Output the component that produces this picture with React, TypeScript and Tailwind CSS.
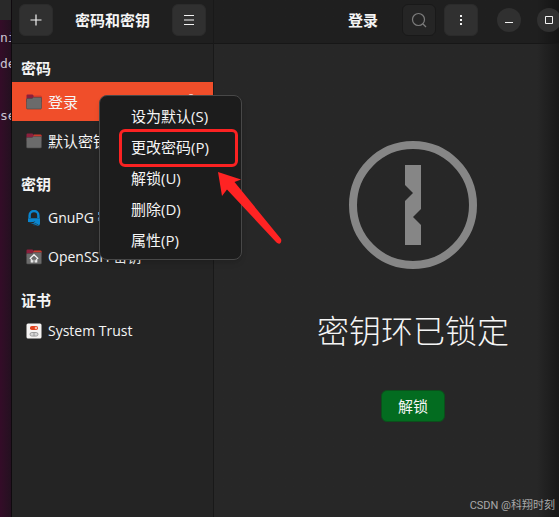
import type {ReactNode} from 'react';

type KeyringItem = {
  label: string;
  icon: ReactNode;
  selected?: boolean;
  latin?: boolean;
  compact?: boolean;
};

type Section = {
  title: string;
  items: KeyringItem[];
};

const FolderIcon = ({home = false}: {home?: boolean}) => (
  <svg viewBox="0 0 16 16" className="size-4 shrink-0" aria-hidden="true">
    <path d="M.5 1.5q0-1 1-1h5L8 2h6.5q1 0 1 1v5H.5z" fill="#8c1f3c"/>
    <path d="M8 1.5h6.5q1 0 1 1V4H7z" fill="#d33a2c"/>
    <path d="M1.5 4.5H6L7.5 3.4H15q.5 0 .5.5V14q0 1-1 1h-13q-1 0-1-1V5.5q0-1 1-1z" fill="#6b6b6b" stroke="#484848" strokeWidth=".6"/>
    {home && (
      <path d="M3.8 9.8 8 5.7l4.2 4.1M5.3 9.7V13h1.5v-2.2M10.7 9.7V13H9.2v-2.2" fill="none" stroke="#f2f2f2" strokeWidth="1.2"/>
    )}
  </svg>
);

const GnupgIcon = () => (
  <svg viewBox="0 0 16 16" className="size-4 shrink-0" aria-hidden="true">
    <path d="M3.6 8V5.4a4.4 4.4 0 0 1 8.8 0V8" fill="none" stroke="#0a86cf" strokeWidth="2.4"/>
    <path d="M2 8.2h12v5.6q0 2-2.5 2H9q3-.2 3.5-1.7-2 1.2-5.5 1 3-.6 4-2.2-2.5 1.2-6.5.8 4-.6 5-2.4-3 1.3-7.5.8z" fill="#0a86cf"/>
  </svg>
);

const TrustIcon = () => (
  <svg viewBox="0 0 16 16" className="size-4 shrink-0" aria-hidden="true">
    <rect x=".5" y=".5" width="15" height="15" rx="1.5" fill="#f5f3f2"/>
    <rect x="4" y="3" width="8" height="4" rx="1.8" fill="#e2431e"/>
    <circle cx="10" cy="5" r="1.3" fill="#f7b9a6"/>
    <rect x="4" y="9.5" width="8" height="3.6" rx="1.8" fill="#d6d6d6" stroke="#8d8d8d" strokeWidth=".8"/>
    <path d="M8 9.5v3.6" stroke="#8d8d8d" strokeWidth=".8"/>
  </svg>
);

const UnlockedIcon = () => (
  <svg viewBox="0 0 16 16" className="size-4 shrink-0" aria-hidden="true">
    <path d="M5 8V4a3 3 0 0 1 6 0v4" fill="none" stroke="#fff" strokeWidth="1.6"/>
    <rect x="3" y="7" width="10" height="8" rx="1" fill="#fff"/>
  </svg>
);

const SECTIONS: Section[] = [
  {
    title: '密码',
    items: [
      {label: '登录', icon: <FolderIcon/>, selected: true},
      {label: '默认密钥环', icon: <FolderIcon/>},
    ],
  },
  {
    title: '密钥',
    items: [
      {label: 'GnuPG 密钥', icon: <GnupgIcon/>, latin: true},
      {label: 'OpenSSH 密钥', icon: <FolderIcon home/>, latin: true},
    ],
  },
  {
    title: '证书',
    items: [{label: 'System Trust', icon: <TrustIcon/>, latin: true, compact: true}],
  },
];

const MENU_ITEMS = ['设为默认(S)', '更改密码(P)', '解锁(U)', '删除(D)', '属性(P)'];

const HeaderButton = ({label, flat = false, children}: {label: string; flat?: boolean; children: ReactNode}) => (
  <button
    type="button"
    aria-label={label}
    className={`flex h-8 w-[34px] shrink-0 items-center justify-center rounded-md border ${
      flat ? 'border-[#191919] bg-[#252525] text-[#7c7c7c]' : 'border-[#2b2b2b] bg-[#303030] text-[#f2f2f2]'
    }`}
  >
    {children}
  </button>
);

const WindowButton = ({label, children}: {label: string; children: ReactNode}) => (
  <button
    type="button"
    aria-label={label}
    className="flex size-6 shrink-0 items-center justify-center rounded-full bg-[#303030] text-[#f2f2f2]"
  >
    {children}
  </button>
);

function Terminal() {
  return (
    <div className="flex w-3 shrink-0 flex-col overflow-hidden border-r border-[#0f0a0e] bg-linear-to-r from-[#340c28] to-[#241020]">
      <div className="h-5 bg-[#292929]"/>
      <pre className="pt-[5px] font-['DejaVu_Sans_Mono',monospace] text-[13px] leading-[26px] text-[#c9c3cf]">
        {'ni\nde\n\nse'}
      </pre>
    </div>
  );
}

function Sidebar() {
  return (
    <aside className="w-[202px] shrink-0 border-r border-[#191919] bg-[#242424]">
      <header className="flex h-11 items-start justify-between border-b border-[#171717] bg-[#1f1f1f] px-[7px] pt-1">
        <HeaderButton label="添加">
          <svg viewBox="0 0 12 12" className="size-3" stroke="currentColor" strokeWidth="1.2">
            <path d="M6 .5v11M.5 6h11"/>
          </svg>
        </HeaderButton>
        <h1 className="text-[15px] leading-8 font-bold">密码和密钥</h1>
        <HeaderButton label="主菜单">
          <svg viewBox="0 0 10 10" className="size-2.5" stroke="currentColor" strokeWidth="1">
            <path d="M0 .5h10M0 5h10M0 9.5h10"/>
          </svg>
        </HeaderButton>
      </header>
      <nav>
        {SECTIONS.map((section) => (
          <section key={section.title}>
            <h2 className="px-[9px] pt-[14px] pb-1 text-[15px] leading-5 font-bold">{section.title}</h2>
            <ul>
              {section.items.map((item) => (
                <li key={item.label}>
                  <a
                    href="#"
                    className={`flex items-center gap-1.5 px-[14px] whitespace-nowrap ${
                      item.compact ? 'h-[33px]' : 'h-[39px]'
                    } ${item.latin ? 'text-sm' : ''} ${item.selected ? 'bg-[#f04e2a]' : ''}`}
                  >
                    {item.icon}
                    <span className="flex-1">{item.label}</span>
                    {item.selected && <UnlockedIcon/>}
                  </a>
                </li>
              ))}
            </ul>
          </section>
        ))}
      </nav>
    </aside>
  );
}

function ContextMenu() {
  return (
    <div role="menu" className="absolute top-[95px] left-[99px] w-[143px] rounded-lg border border-[#484848] bg-[#1c1c1c] py-1 shadow-md">
      {MENU_ITEMS.map((label) => (
        <button key={label} type="button" role="menuitem" className="block h-[31px] w-full pl-[31px] text-left">
          {label}
        </button>
      ))}
      <div className="pointer-events-none absolute top-[33px] left-[19px] h-[38px] w-[119px] rounded-md border-3 border-[#fb2222]"/>
      <svg viewBox="0 0 64 72" className="pointer-events-none absolute top-[76px] left-[118px] h-[72px] w-16" aria-hidden="true">
        <path d="M0 0 23 7.5 16.5 10 63 67Q64 70 62 71.5 60 72 58.5 70.5L9 17.5 4 24z" fill="#ff2323"/>
      </svg>
    </div>
  );
}

export default function App() {
  return (
    <div className="relative flex min-h-screen overflow-hidden bg-[#272727] font-['Open_Sans','Noto_Sans_CJK_SC',sans-serif] text-[15px] leading-5 text-[#f5f5f5]">
      <Terminal/>
      <Sidebar/>
      <main className="flex min-w-0 flex-1 flex-col bg-linear-to-l from-[#181818] to-[#272727] to-[22px]">
        <header className="flex h-11 items-start justify-end border-b border-[#171717] bg-linear-to-l from-[#141414] to-[#1f1f1f] to-[22px] pt-1">
          <h2 className="mr-6 text-[15px] leading-8 font-bold">登录</h2>
          <div className="flex gap-2">
            <HeaderButton label="搜索" flat>
              <svg viewBox="0 0 16 16" className="size-4" fill="none" stroke="currentColor" strokeWidth="1.2">
                <circle cx="7.5" cy="7.5" r="6"/>
                <path d="m12 12 3 3"/>
              </svg>
            </HeaderButton>
            <HeaderButton label="更多">
              <svg viewBox="0 0 2 10" className="h-2.5 w-0.5" fill="currentColor">
                <path d="M0 0h2v2H0zM0 4h2v2H0zM0 8h2v2H0z"/>
              </svg>
            </HeaderButton>
          </div>
          <div className="-mr-0.5 ml-[19px] flex gap-4 pt-1">
            <WindowButton label="最小化">
              <svg viewBox="0 0 8 8" className="size-2" stroke="currentColor">
                <path d="M0 6.5h8"/>
              </svg>
            </WindowButton>
            <WindowButton label="最大化">
              <svg viewBox="0 0 8 8" className="size-2" fill="none" stroke="currentColor">
                <path d="M.5.5h7v7h-7z"/>
              </svg>
            </WindowButton>
          </div>
        </header>
        <div className="flex flex-1 flex-col items-center justify-center pt-0.5 pl-[53px]">
          <svg viewBox="0 0 128 128" className="size-32" aria-hidden="true">
            <circle cx="64" cy="64" r="60" fill="none" stroke="#868686" strokeWidth="8"/>
            <path d="M56 24h16v44l-8 8 8 8v20H56V60l8-8-8-8z" fill="#868686"/>
          </svg>
          <p className="mt-10 text-[32px] leading-[44px] font-light whitespace-nowrap">密钥环已锁定</p>
          <button type="button" className="mt-[37px] h-8 rounded-md border border-[#0b4f1b] bg-[#036c20] px-4">
            解锁
          </button>
        </div>
      </main>
      <ContextMenu/>
      <p className="absolute right-1 bottom-[3px] font-['Roboto','Noto_Sans_CJK_SC',sans-serif] text-[11px] leading-4 text-[#a9a9a9]">
        CSDN @科翔时刻
      </p>
    </div>
  );
}
